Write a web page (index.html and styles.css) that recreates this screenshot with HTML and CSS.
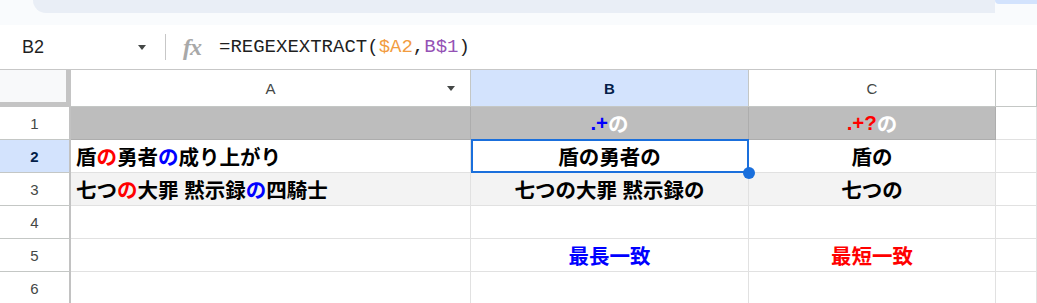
FILE: index.html
```html
<!DOCTYPE html>
<html lang="ja">
<head>
  <meta charset="UTF-8">
  <meta name="viewport" content="width=device-width, initial-scale=1.0">
  <title>REGEXEXTRACT</title>
  <link rel="stylesheet" href="styles.css">
</head>
<body>
  <div class="topbar">
    <div class="search"></div>
    <div class="share"></div>
  </div>

  <div class="formula-bar">
    <div class="name-box">
      <span class="name">B2</span>
      <span class="caret"></span>
    </div>
    <div class="divider"></div>
    <span class="fx">fx</span>
    <span class="formula">=REGEXEXTRACT(<span class="ref-a">$A2</span>,<span class="ref-b">B$1</span>)</span>
  </div>

  <div class="sheet">
    <!-- header row -->
    <div class="cell corner"></div>
    <div class="cell col-head col-a"><span></span><span>A</span><span class="caret"></span></div>
    <div class="cell col-head active">B</div>
    <div class="cell col-head">C</div>
    <div class="cell col-head"></div>

    <!-- row 1 -->
    <div class="cell row-head">1</div>
    <div class="cell fill"></div>
    <div class="cell fill"><span class="blue">.+</span><span class="white">の</span></div>
    <div class="cell fill"><span class="red">.+?</span><span class="white">の</span></div>
    <div class="cell"></div>

    <!-- row 2 -->
    <div class="cell row-head active">2</div>
    <div class="cell left">盾<span class="red">の</span>勇者<span class="blue">の</span>成り上がり</div>
    <div class="cell selected">盾の勇者の<div class="sel"><div class="handle"></div></div></div>
    <div class="cell">盾の</div>
    <div class="cell"></div>

    <!-- row 3 -->
    <div class="cell row-head">3</div>
    <div class="cell left shade">七つ<span class="red">の</span>大罪 黙示録<span class="blue">の</span>四騎士</div>
    <div class="cell shade">七つの大罪 黙示録の</div>
    <div class="cell shade">七つの</div>
    <div class="cell"></div>

    <!-- row 4 -->
    <div class="cell row-head">4</div>
    <div class="cell"></div>
    <div class="cell"></div>
    <div class="cell"></div>
    <div class="cell"></div>

    <!-- row 5 -->
    <div class="cell row-head">5</div>
    <div class="cell"></div>
    <div class="cell blue">最長一致</div>
    <div class="cell red">最短一致</div>
    <div class="cell"></div>

    <!-- row 6 -->
    <div class="cell row-head">6</div>
    <div class="cell"></div>
    <div class="cell"></div>
    <div class="cell"></div>
    <div class="cell"></div>
  </div>
</body>
</html>
```

FILE: styles.css
```css
html, body {
  margin: 0;
  padding: 0;
  overflow: hidden;
}

body {
  font-family: "Liberation Sans", "Noto Sans CJK JP", sans-serif;
  background: #ffffff;
  color: #000;
}

.topbar {
  height: 25px;
  display: flex;
  background: #f9fbfd;
}

.search {
  margin-left: 33px;
  width: 962px;
  height: 13px;
  background: #e9eef6;
  border-bottom-left-radius: 14px;
}

.share {
  flex: 1;
  height: 4px;
  background: #d3e3fd;
  border-bottom-left-radius: 8px;
}

.formula-bar {
  height: 44px;
  display: flex;
  align-items: center;
  background: #fff;
  border-bottom: 1px solid #c7c7c7;
}

.name-box {
  width: 160px;
  box-sizing: border-box;
  padding: 0 14px 0 22px;
  display: flex;
  align-items: center;
  justify-content: space-between;
}

.name {
  font-size: 18px;
  color: #1f1f1f;
}

.caret {
  width: 0;
  height: 0;
  border-left: 4.5px solid transparent;
  border-right: 4.5px solid transparent;
  border-top: 5px solid #444746;
}

.divider {
  width: 1px;
  height: 26px;
  margin-left: 5px;
  background: #c7c7c7;
}

.fx {
  margin-left: 17px;
  font-family: "Liberation Serif", serif;
  font-style: italic;
  font-weight: bold;
  font-size: 24px;
  color: #a8a8a8;
  letter-spacing: -1px;
}

.formula {
  margin-left: 18px;
  font-family: "Liberation Mono", monospace;
  font-size: 19px;
  color: #1f1f1f;
}

.ref-a { color: #f29c3f; }
.ref-b { color: #9452b5; }

.sheet {
  display: grid;
  grid-template-columns: 71px 400px 278px 247px 1fr;
  grid-template-rows: 37px repeat(6, 33px);
}

.cell {
  box-sizing: border-box;
  border-right: 1px solid #e1e1e1;
  border-bottom: 1px solid #e1e1e1;
  display: flex;
  align-items: center;
  justify-content: center;
  font-weight: bold;
  font-size: 20.5px;
  white-space: nowrap;
}

.cell.left {
  justify-content: flex-start;
  padding-left: 5px;
}

.corner {
  background: #f8f9fa;
  border-right: 5px solid #c4c4c4;
  border-bottom: 5px solid #c4c4c4;
}

.col-head,
.row-head {
  font-weight: normal;
  font-size: 15px;
  color: #444746;
}

.col-head {
  border-right-color: #c4c7c5;
  border-bottom-color: #c4c7c5;
}

.col-a {
  display: grid;
  grid-template-columns: 1fr auto 1fr;
  align-items: center;
}

.col-a .caret {
  justify-self: end;
  margin-right: 15px;
}

.row-head {
  border-right: 2px solid #c2c2c2;
  border-bottom-color: #c4c7c5;
}

.active {
  background: #d3e3fd;
  color: #041e49;
  font-weight: bold;
}

.fill {
  background: #bdbdbd;
  border-right-color: #adadad;
  border-bottom-color: #adadad;
}

.shade {
  background: #f3f3f3;
}

.blue { color: #0000ff; }
.red { color: #ff0000; }
.white { color: #ffffff; }

.selected {
  position: relative;
}

.sel {
  position: absolute;
  top: -1px;
  left: 0;
  right: -1px;
  bottom: -1px;
  border: 2px solid #1a6fdc;
}

.handle {
  position: absolute;
  right: -8px;
  bottom: -8px;
  width: 12px;
  height: 12px;
  border-radius: 50%;
  background: #1a6fdc;
}
```
